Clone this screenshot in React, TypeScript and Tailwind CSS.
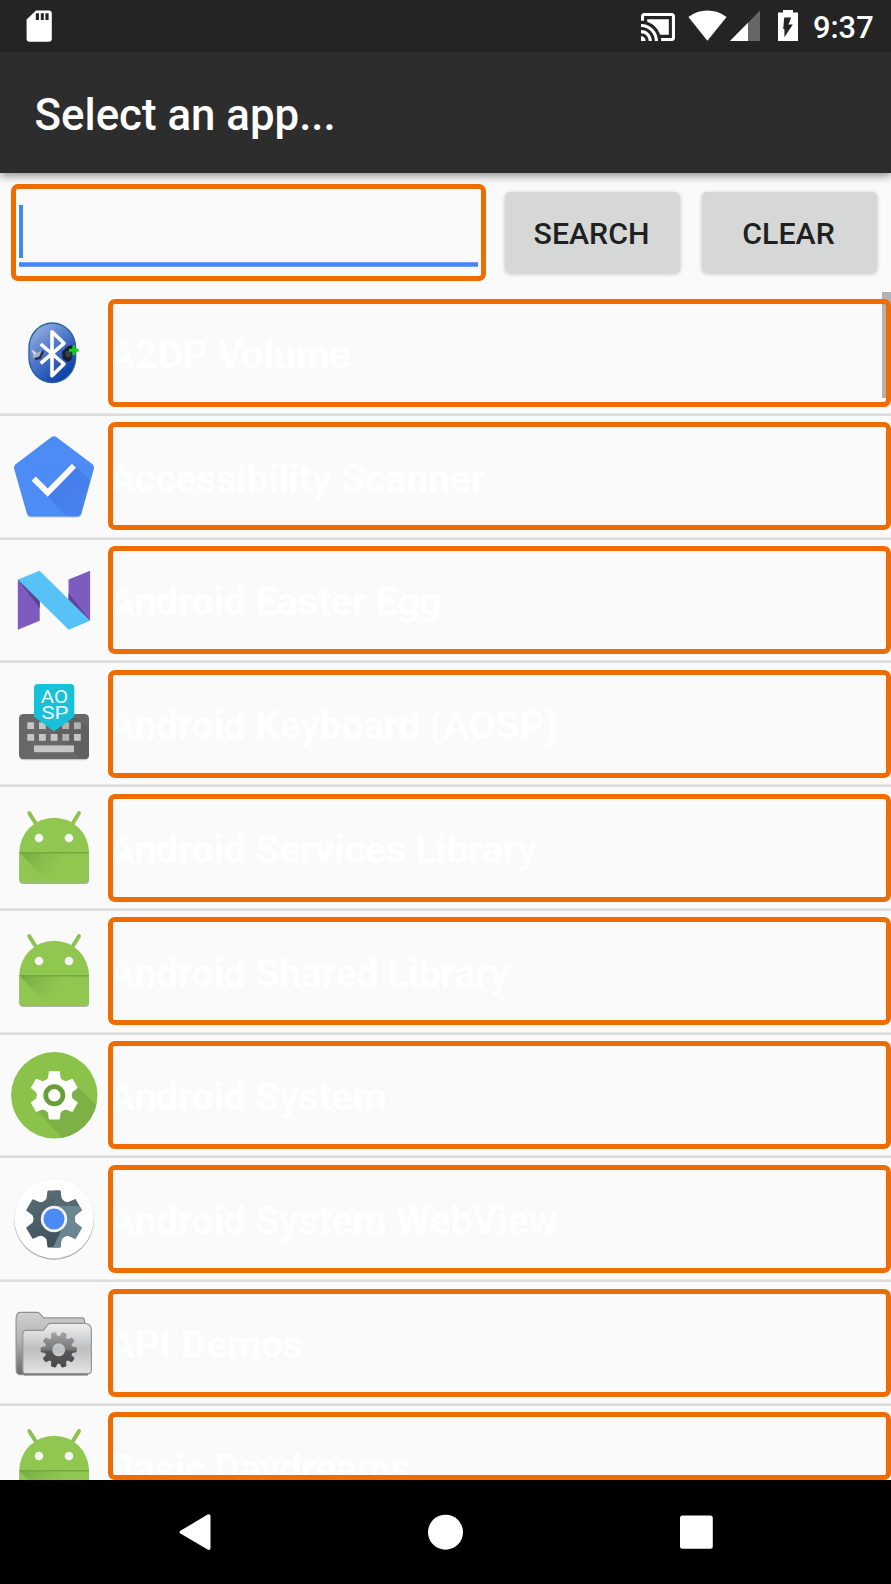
import type { ReactNode } from 'react';

function gearPath(r: number): string {
  const pt = (deg: number, radius: number) => {
    const a = (deg * Math.PI) / 180;
    return `${(54 + Math.cos(a) * radius).toFixed(2)} ${(54 + Math.sin(a) * radius).toFixed(2)}`;
  };
  let d = '';
  for (let i = 0; i < 6; i++) {
    const a = i * 60 - 90;
    d += `${i === 0 ? 'M' : 'L'}${pt(a - 20, r * 0.76)}L${pt(a - 13.5, r * 0.98)}Q${pt(a - 13, r * 1.02)} ${pt(a - 11, r * 1.01)}`;
    d += `L${pt(a + 11, r * 1.01)}Q${pt(a + 13, r * 1.02)} ${pt(a + 13.5, r * 0.98)}L${pt(a + 20, r * 0.76)}`;
    d += `Q${pt(a + 30, r * 0.68)} ${pt(a + 40, r * 0.76)}`;
  }
  return d + 'Z';
}

function IconFrame({ children }: { children: ReactNode }) {
  return (
    <svg viewBox="0 0 108 108" className="h-[108px] w-[108px] shrink-0">
      {children}
    </svg>
  );
}

function BluetoothIcon() {
  return (
    <IconFrame>
      <defs>
        <linearGradient id="bt" x1="0" y1="0" x2="0.7" y2="1">
          <stop offset="0" stopColor="#a9bde6" />
          <stop offset="0.5" stopColor="#4f79ca" />
          <stop offset="1" stopColor="#0a3ba6" />
        </linearGradient>
      </defs>
      <rect x="29" y="24" width="46.6" height="59.6" rx="23.3" ry="25" fill="url(#bt)" stroke="#2464a4" strokeWidth="1.4" />
      <path d="M31 50l9 6-5 3z" fill="#cfd4da" />
      <path d="M33 58l9-5" fill="none" stroke="#aab4c0" strokeWidth="2.6" />
      <path d="M35 60l5-1 3-7" fill="none" stroke="#263246" strokeWidth="2.4" />
      <path d="M62 53l6-6 5-1 1 6-3 9-3 2-5-3z" fill="#14202a" />
      <circle cx="68.5" cy="55" r="3.2" fill="#35424c" />
      <path d="M40.7 45L64 65 52 76.7v-44L64 44.3 40.7 64.3" fill="none" stroke="#fff" strokeWidth="3.6" strokeLinejoin="round" />
      <path d="M69 51.3h9.6M73.8 46.5v9.6" stroke="#12d312" strokeWidth="3" />
    </IconFrame>
  );
}

function ScannerIcon() {
  const shape = 'M51.6 15Q54 13.4 56.4 15L92.4 42.2Q94.4 44 93.8 46.4L81.2 91.8Q80.3 94.4 77.5 94.4H30.8Q28 94.4 27.1 91.8L14.2 46.4Q13.6 44 15.6 42.2Z';
  return (
    <IconFrame>
      <defs>
        <clipPath id="penta"><path d={shape} /></clipPath>
        <linearGradient id="pentaShade" x1="0" y1="0" x2="0.8" y2="1">
          <stop offset="0" stopColor="#3367d6" stopOpacity="0.5" />
          <stop offset="1" stopColor="#3367d6" stopOpacity="0.1" />
        </linearGradient>
      </defs>
      <path d={shape} fill="#000" opacity="0.2" transform="translate(0 1.2)" />
      <path d={shape} fill="#4d8bf5" />
      <path d="M47.7 74.5L76 44.5 104 72V104H76Z" fill="url(#pentaShade)" clipPath="url(#penta)" />
      <path d="M33.7 56.6L47.7 70.6 74 43.8" fill="none" stroke="#fafafa" strokeWidth="5.8" />
    </IconFrame>
  );
}

function NougatIcon() {
  return (
    <IconFrame>
      <path d="M17.8 33.5L39.7 50V74.7L17.8 83.7ZM68.5 33.5L90.1 24.7V74.7L68.5 60Z" fill="#7e5bbf" />
      <path d="M17.8 33.5L39.7 62.3V50ZM68.5 47L90.1 74.7 68.5 58Z" fill="#5c4396" />
      <path d="M17.8 33.5L39.7 24.7 90.1 74.7 68.7 83.7Z" fill="#57c2f6" />
    </IconFrame>
  );
}

function KeyboardIcon() {
  const cols = [27.3, 39, 50.7, 62.3, 74];
  return (
    <IconFrame>
      <rect x="19" y="45.2" width="70" height="45" rx="4.5" fill="#000" opacity="0.2" />
      <rect x="19" y="44" width="70" height="45" rx="4.5" fill="#686868" />
      <path d="M54 61.3L74.3 46.7 89 58V85q0 4-4 4H81Z" fill="#616161" />
      {cols.map((x, i) => (
        <g key={x} fill="#c6c6c6">
          <rect x={x} y="52.3" width="6.8" height="6.8" opacity={i > 2 ? 0.8 : 1} />
          <rect x={x} y="64" width="6.8" height="6.8" opacity={i === 3 ? 0.8 : 1} />
        </g>
      ))}
      <rect x="34" y="75.4" width="40" height="6.8" fill="#c6c6c6" />
      <path d="M38 14H70.3Q74.3 14 74.3 18V46.7L54.1 61.3 34 46.7V18Q34 14 38 14Z" fill="#18c0d8" />
      <g fill="#f2fcfd" fontFamily="Roboto, sans-serif" fontSize="17.8">
        <text x="40.8" y="33.4" textLength="27.4" lengthAdjust="spacingAndGlyphs">AO</text>
        <text x="41.4" y="49.2" textLength="27" lengthAdjust="spacingAndGlyphs">SP</text>
      </g>
    </IconFrame>
  );
}

function AndroidIcon() {
  return (
    <IconFrame>
      <defs>
        <linearGradient id="robotShade" x1="0" y1="0" x2="1" y2="0.3">
          <stop offset="0" stopColor="#6d9c3f" stopOpacity="0.75" />
          <stop offset="0.65" stopColor="#7cb342" stopOpacity="0" />
        </linearGradient>
      </defs>
      <path d="M19.3 60V86Q19.3 90 23.3 90H85Q89 90 89 86V60Z" fill="#000" opacity="0.3" />
      <path d="M29.3 20L36.5 31M79 20L72 31" stroke="#777" strokeWidth="3.6" strokeLinecap="round" opacity="0.4" />
      <path d="M29.3 18.9L36.8 31M79 18.9L71.5 31" stroke="#8bc34a" strokeWidth="3.7" strokeLinecap="round" />
      <path d="M19.3 58.5A34.85 34.85 0 0 1 89 58.5V84.9Q89 88.7 85.2 88.7H23.1Q19.3 88.7 19.3 84.9Z" fill="#8fc751" />
      <path d="M19.5 58.5H89V84.9Q89 88.7 85.2 88.7H48.5Z" fill="url(#robotShade)" />
      <path d="M19.3 58.8H89" stroke="#76a841" strokeWidth="1.4" />
      <circle cx="39" cy="44" r="4.3" fill="#f5f5f5" />
      <circle cx="69" cy="44" r="4.3" fill="#f5f5f5" />
    </IconFrame>
  );
}

function SystemIcon() {
  return (
    <IconFrame>
      <defs>
        <clipPath id="sysDisc"><circle cx="54.3" cy="54.3" r="43.2" /></clipPath>
      </defs>
      <circle cx="54.3" cy="54.3" r="43.2" fill="#8bc34a" />
      <path d="M36 69L76 44 100 68V100H65Z" fill="#7eb048" clipPath="url(#sysDisc)" />
      <path d={gearPath(24.3)} fill="#fff" transform="translate(0.3 0.3)" />
      <circle cx="54.3" cy="54.3" r="8.6" fill="#fff" stroke="#689f38" strokeWidth="4.8" />
    </IconFrame>
  );
}

function WebViewIcon() {
  return (
    <IconFrame>
      <defs>
        <clipPath id="webGear"><path d={gearPath(28.8)} /></clipPath>
        <linearGradient id="webDark" x1="0" y1="0" x2="0.5" y2="1">
          <stop offset="0" stopColor="#5f747e" />
          <stop offset="1" stopColor="#3b4c54" />
        </linearGradient>
      </defs>
      <circle cx="54" cy="55" r="39.9" fill="#000" opacity="0.24" />
      <circle cx="54" cy="54" r="40.4" fill="#000" opacity="0.08" />
      <circle cx="54" cy="53.6" r="39.8" fill="#fff" />
      <g clipPath="url(#webGear)">
        <rect x="20" y="20" width="70" height="70" fill="url(#webDark)" />
        <path d="M54 41H90V90H49L64 60Z" fill="#698692" />
        <path d="M54 24H90V41H54Z" fill="#566a74" />
      </g>
      <circle cx="54" cy="54" r="13.2" fill="#f1f1f1" />
      <circle cx="54" cy="54" r="10.5" fill="#4a8af4" />
    </IconFrame>
  );
}

function FolderIcon() {
  const teeth = [0, 36, 72, 108, 144, 180, 216, 252, 288, 324];
  return (
    <IconFrame>
      <defs>
        <linearGradient id="folderBack" x1="0" y1="0" x2="0" y2="1">
          <stop offset="0" stopColor="#cfd0d1" />
          <stop offset="0.45" stopColor="#b2b3b5" />
          <stop offset="1" stopColor="#6a6b6c" />
        </linearGradient>
        <linearGradient id="folderFront" x1="0" y1="0" x2="0" y2="1">
          <stop offset="0" stopColor="#efefef" />
          <stop offset="0.5" stopColor="#bfc0c2" />
          <stop offset="0.58" stopColor="#c3c4c6" />
          <stop offset="1" stopColor="#e3e3e3" />
        </linearGradient>
        <linearGradient id="cog" gradientUnits="userSpaceOnUse" x1="0" y1="43" x2="0" y2="79">
          <stop offset="0" stopColor="#a5a5a5" />
          <stop offset="0.48" stopColor="#777" />
          <stop offset="0.55" stopColor="#555" />
          <stop offset="1" stopColor="#4a4a4a" />
        </linearGradient>
        <mask id="cogMask">
          <g fill="#fff">
            <circle cx="58.7" cy="60.8" r="13.9" />
            {teeth.map((a) => (
              <path key={a} d="M55.2 49.5L56 43.9Q56.2 42.8 57.2 42.8H60.2Q61.2 42.8 61.4 43.9L62.2 49.5Z" transform={`rotate(${a + 18} 58.7 60.8)`} />
            ))}
          </g>
          <circle cx="58.7" cy="60.8" r="6.5" fill="#000" />
        </mask>
      </defs>
      <path d="M16 32Q16 23.4 20 23.4H37.5Q39.4 23.4 43.6 28.9H82Q84.4 28.9 84.6 32V85.6H20Q16.2 85.6 16.2 81Z" fill="url(#folderBack)" stroke="#8d8e8f" strokeWidth="1.1" />
      <path d="M24 85.8H88" stroke="#7d7d7d" strokeWidth="1.4" />
      <path d="M22.8 45Q22.8 41.4 26 41.4H43.3L48 35.5Q49 34.4 50.6 34.4H85.5Q91.4 35.5 91.4 41V81.5Q91.4 84.6 88.5 84.6H25.7Q22.8 84.6 22.8 81.5Z" fill="url(#folderFront)" stroke="#8f9091" strokeWidth="1.1" />
      <rect x="38" y="40" width="41" height="41" fill="url(#cog)" mask="url(#cogMask)" />
    </IconFrame>
  );
}

const apps = [
  { name: 'A2DP Volume', Icon: BluetoothIcon },
  { name: 'Accessibility Scanner', Icon: ScannerIcon },
  { name: 'Android Easter Egg', Icon: NougatIcon },
  { name: 'Android Keyboard (AOSP)', Icon: KeyboardIcon },
  { name: 'Android Services Library', Icon: AndroidIcon },
  { name: 'Android Shared Library', Icon: AndroidIcon },
  { name: 'Android System', Icon: SystemIcon },
  { name: 'Android System WebView', Icon: WebViewIcon },
  { name: 'API Demos', Icon: FolderIcon },
];

function AppLabel({ name, className }: { name: string; className: string }) {
  return (
    <div className={`relative flex-1 overflow-hidden ${className}`}>
      <div className="pt-[33.4px] pl-px text-[39px] leading-[46px] font-bold tracking-[-0.1px] whitespace-nowrap text-white">{name}</div>
      <div className="absolute inset-0 rounded-[7px] border-[5px] border-[#ef6c00]" />
    </div>
  );
}

function StatusBar() {
  return (
    <div className="flex h-[52px] items-start bg-[#242424] text-white">
      <svg viewBox="0 0 26 32" className="mt-[10px] ml-[26px] h-[32px] w-[26px]" fill="#fff">
        <path fillRule="evenodd" d="M10 .4H22.8Q25.8.4 25.8 3.4V28.8Q25.8 31.8 22.8 31.8H3.6Q.6 31.8.6 28.8V9.6ZM9.8 3.3V10H13V3.3ZM14.8 3.3V10H17.8V3.3ZM19.4 3.3V10H22.6V3.3Z" />
      </svg>
      <div className="flex-1" />
      <svg viewBox="1 3 22 18" preserveAspectRatio="none" className="mt-[12.5px] h-[28px] w-[34px]" fill="#fff">
        <path d="M1 18v3h3c0-1.66-1.34-3-3-3zm0-4v2c2.76 0 5 2.24 5 5h2c0-3.87-3.13-7-7-7zm18-7H5v1.63c3.96 1.28 7.09 4.41 8.37 8.37H19V7zM1 10v2c4.97 0 9 4.03 9 9h2c0-6.08-4.93-11-11-11zm20-7H3c-1.1 0-2 .9-2 2v3h2V5h18v14h-7v2h7c1.1 0 2-.9 2-2V5c0-1.1-.9-2-2-2z" />
      </svg>
      <svg viewBox="0 0 39 31" className="mt-[10px] ml-[12.5px] h-[31px] w-[39px]" fill="#fff">
        <path d="M.4 7Q9 .6 19.4 .6T38.6 7L19.4 30.8Z" />
      </svg>
      <svg viewBox="0 0 30 31" className="mt-[10px] ml-[3.5px] h-[31px] w-[30px]">
        <path d="M0 31L30 .5V31Z" fill="#666" />
        <path d="M0 31L18 12.7V31Z" fill="#fff" />
      </svg>
      <svg viewBox="0 0 20 31" className="mt-[10px] ml-[18px] h-[31px] w-[20px]">
        <path d="M0 2.6H5V0H15V2.6H20V31H0Z" fill="#fff" />
        <path d="M6.2 7.4H13.2L10.4 14.4H14.8L6.4 27.2V19H5.2Z" fill="#242424" />
      </svg>
      <div className="mt-[9px] mr-[18px] ml-[15px] w-[60px] text-[30.8px] leading-[38px] font-medium whitespace-nowrap">9:37</div>
    </div>
  );
}

export default function App() {
  return (
    <div className="flex h-[1584px] w-[891px] flex-col overflow-hidden bg-[#fafafa] font-['Roboto',sans-serif]">
      <StatusBar />
      <header className="relative z-10 flex h-[121px] items-center bg-[#2d2d2d] pl-[34.5px] shadow-[0_3px_8px_rgba(0,0,0,0.42)]">
        <h1 className="pt-[5px] text-[43.8px] leading-[52px] font-medium text-white">Select an app...</h1>
      </header>

      <div className="flex h-[119px] shrink-0 items-start pl-[11px]">
        <div className="mt-[11px] flex h-[97px] w-[475px] flex-col rounded-[7px] border-[5px] border-[#ef6c00] pl-[3px]">
          <div className="mt-[16px] h-[53px] w-[4px] bg-[#4486f7]" />
          <div className="mt-[4px] h-[5px] w-[459px] border-y border-[#6fa2f8] bg-[#4486f7]" />
        </div>
        <button className="mt-[19px] ml-[19px] h-[81px] w-[175px] rounded-[5px] bg-[#d6d8d7] pt-[2px] pr-[2px] text-[30.3px] font-medium text-[#1f2020] shadow-[0_1px_4px_rgba(0,0,0,0.22)]">SEARCH</button>
        <button className="mt-[19px] ml-[22px] h-[81px] w-[175px] rounded-[5px] bg-[#d6d8d7] pt-[2px] pr-[2px] text-[30.3px] font-medium text-[#1f2020] shadow-[0_1px_4px_rgba(0,0,0,0.22)]">CLEAR</button>
      </div>

      <main className="relative h-[1188px] shrink-0 overflow-hidden">
        <div className="absolute top-0 right-0 h-[105.5px] w-[9px] bg-[#b2b2b2]" />
        {apps.map(({ name, Icon }) => (
          <div key={name} className="flex h-[123.75px] flex-col justify-between">
            <div className="flex pt-[6.6px]">
              <Icon />
              <AppLabel name={name} className="h-[108px]" />
            </div>
            <div className="h-[3px] border-t border-[#e8e8e8] bg-[#dcdcdc]" />
          </div>
        ))}
        <div className="flex items-start pt-[6.6px]">
          <AndroidIcon />
          <AppLabel name="Basic Daydreams" className="h-[68px]" />
        </div>
      </main>

      <nav className="flex h-[104px] shrink-0 bg-black">
        <svg viewBox="0 0 891 104" className="h-[104px] w-[891px]" fill="#fff">
          <path d="M180.4 50.8L207.6 34.6Q210.5 33.4 210.5 36.4V68Q210.5 71 207.6 69.6L180.4 53.6Q178.6 52.2 180.4 50.8Z" />
          <circle cx="445.5" cy="52.2" r="17.5" />
          <rect x="680" y="35.5" width="32.8" height="33.2" rx="2.5" />
        </svg>
      </nav>
    </div>
  );
}
